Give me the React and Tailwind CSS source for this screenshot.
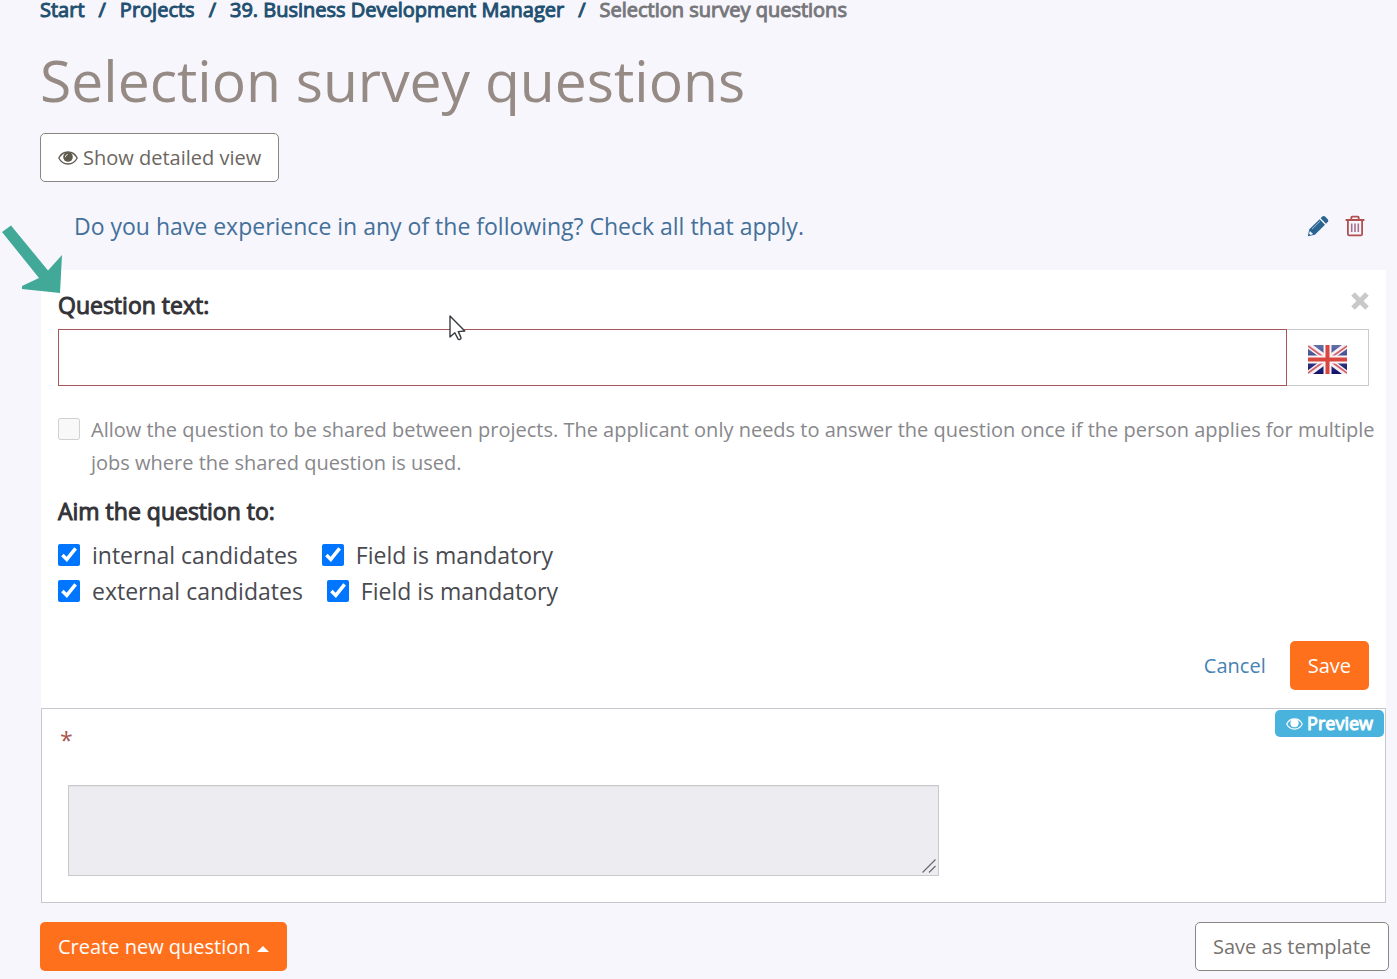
import { useState } from "react";

const crumbs = ["Start", "Projects", "39. Business Development Manager"];

function EyeIcon({ className }) {
    return (
        <svg viewBox="0 0 20 14" className={className} aria-hidden="true">
            <path fill="none" stroke="currentColor" strokeWidth="1.300" d="M.8 7C2.700 3.300 6 1 10 1s7.300 2.300 9.200 6c-1.900 3.700-5.200 6-9.200 6S2.700 10.700.8 7Z" />
            <circle cx="10" cy="6" r="4.800" fill="currentColor" />
            <path fill="none" stroke="#fff" strokeOpacity=".8" strokeWidth="1" d="M7.300 6.200Q7.400 3.700 9.800 3.400" />
        </svg>
    );
}

function PencilIcon() {
    return (
        <svg viewBox="0 0 22 22" className="h-[22px] w-[22px]" aria-hidden="true">
            <path fill="#2a6592" d="M15.300 1.600c.8-.8 2-.8 2.800 0l2.600 2.600c.8.8.8 2 0 2.800l-1.700 1.700-5.400-5.400ZM12.600 4.300l5.400 5.400L7.900 19.700 0.800 21.200l1.500-7Z" />
            <path fill="#f5f6fc" d="M2.900 16.100l3.200 3-2.600.9-1.400-1.400Z" />
            <path stroke="#9fbcd2" strokeWidth="1" d="M5 14 13 6.200" />
        </svg>
    );
}

function TrashIcon() {
    return (
        <svg viewBox="0 0 20 22" className="h-[22px] w-5" fill="none" stroke="#b0514f" aria-hidden="true">
            <path strokeWidth="1.800" d="M.6 5h18.800M6.300 5V2.600q0-1 1-1h5.400q1 0 1 1V5M2.900 5.500v13.500q0 1.400 1.400 1.400h11.400q1.400 0 1.400-1.400v-13.500" />
            <path strokeWidth="1.600" stroke="#a8708a" d="M6.700 8.500v8.500M10 8.500v8.500M13.300 8.500v8.500" />
        </svg>
    );
}

function FlagIcon() {
    return (
        <svg viewBox="0 0 39 29" className="h-[29px] w-[39px]" aria-hidden="true">
            <defs>
                <linearGradient id="flagBlue" x1="0" y1="0" x2="0" y2="1">
                    <stop offset="0" stopColor="#6272a8" />
                    <stop offset="1" stopColor="#11116b" />
                </linearGradient>
                <clipPath id="flagClip">
                    <rect width="39" height="29" rx="1" />
                </clipPath>
            </defs>
            <g clipPath="url(#flagClip)">
                <rect width="39" height="29" fill="url(#flagBlue)" />
                <path stroke="#f6eef2" strokeWidth="6" d="M0 0 39 29M39 0 0 29" />
                <path stroke="#d4606a" strokeWidth="1.800" d="M0 1 18 14M39 1 21 14M0 28 18 15M39 28 21 15" />
                <path stroke="#fbf4f5" strokeWidth="8" d="M19.500 0v29M0 14.500h39" />
                <path stroke="#d9453f" strokeWidth="4" d="M19.500 0v29M0 14.500h39" />
            </g>
        </svg>
    );
}

function CandidateRow({ name }) {
    const [active, setActive] = useState(true);
    const [mandatory, setMandatory] = useState(true);

    return (
        <div className="flex h-9 items-center text-[23px] text-[#494a50]">
            <label className="flex items-center gap-3">
                <input
                    type="checkbox"
                    checked={active}
                    onChange={(e) => setActive(e.target.checked)}
                    className="h-[22px] w-[22px] accent-[#0075ff]"
                />
                {name} candidates
            </label>
            <label className="ml-6 flex items-center gap-3">
                <input
                    type="checkbox"
                    checked={mandatory}
                    onChange={(e) => setMandatory(e.target.checked)}
                    className="h-[22px] w-[22px] accent-[#0075ff]"
                />
                Field is mandatory
            </label>
        </div>
    );
}

export default function App() {
    const [question, setQuestion] = useState("");

    return (
        <div className="min-h-screen bg-[#f6f6fc] pr-2 pb-2 pl-10 font-['Open_Sans',sans-serif]">
            <nav className="flex h-5 items-center text-[20px] leading-5 text-[#1f5070] [-webkit-text-stroke:1px]">
                {crumbs.map((crumb) => (
                    <span key={crumb} className="flex">
                        <a href="#">{crumb}</a>
                        <span className="mx-[14px]">/</span>
                    </span>
                ))}
                <span className="text-[#77777b]">Selection survey questions</span>
            </nav>

            <h1 className="mt-6 text-[57px] leading-[72px] text-[#968a84]">Selection survey questions</h1>

            <button className="mt-[17px] flex h-[49px] items-center gap-[5px] rounded-[5px] border border-[#8c8683] bg-white px-[17px] text-[20px] text-[#6b6661]">
                <EyeIcon className="h-[14px] w-5 text-[#5f584c]" />
                Show detailed view
            </button>

            <div className="flex h-[88px] items-center justify-between pr-6 pl-[34px]">
                <a href="#" className="text-[23px] text-[#44709a]">
                    Do you have experience in any of the following? Check all that apply.
                </a>
                <div className="flex gap-4">
                    <button aria-label="Edit"><PencilIcon /></button>
                    <button aria-label="Delete"><TrashIcon /></button>
                </div>
            </div>

            <form className="relative mr-[3px] ml-px bg-white px-[17px] pt-[18px] pb-[18px]" onSubmit={(e) => e.preventDefault()}>
                {/* pointer to the new question */}
                <svg viewBox="0 0 62 70" className="absolute -top-[46px] -left-[41px] h-[70px] w-[62px]" aria-hidden="true">
                    <path fill="#42a998" d="M2 8 11 1.500 48 46.500 62 31 60 69 22 65v-3l17-8Z" />
                </svg>
                <svg viewBox="0 0 18 28" className="absolute top-[45px] left-[408px] h-7 w-[18px]" aria-hidden="true">
                    <path fill="#fff" stroke="#3a3a42" strokeWidth="1.400" strokeLinejoin="round" d="M1 1v21l4.800-4.300 3.200 6.200q.6 1 1.900.5 1.500-.7 1-2L9.300 16.600l6.500-.6Z" />
                </svg>

                <div className="flex h-[34px] items-start justify-between">
                    <label htmlFor="question" className="text-[23px] leading-[34px] text-[#333338] [-webkit-text-stroke:1px]">Question text:</label>
                    <button type="button" aria-label="Close" className="mt-1">
                        <svg viewBox="0 0 18 18" className="h-[18px] w-[18px]" aria-hidden="true">
                            <path stroke="#c9c9cb" strokeWidth="5" d="M2 2l14 14M16 2 2 16" />
                        </svg>
                    </button>
                </div>
                <div className="mt-[7px] flex h-[57px]">
                    <input
                        id="question"
                        type="text"
                        value={question}
                        onChange={(e) => setQuestion(e.target.value)}
                        className="min-w-0 grow border border-[#a5575a] px-4 text-[23px] outline-none"
                    />
                    <button type="button" aria-label="English" className="flex w-[82px] items-center justify-center border border-l-0 border-[#cacace] pt-[3px]">
                        <FlagIcon />
                    </button>
                </div>

                <label className="mt-[27px] -mr-2 flex items-start gap-[11px] text-[20px] leading-[33px] text-[#88888c]">
                    <input type="checkbox" disabled className="mt-[5px] h-[22px] w-[22px] shrink-0" />
                    <span>
                        Allow the question to be shared between projects. The applicant only needs to answer the question once if the person applies for multiple jobs where the shared question is used.
                    </span>
                </label>

                <h2 className="mt-4 text-[23px] leading-8 text-[#333338] [-webkit-text-stroke:1px]">Aim the question to:</h2>
                <div className="mt-[10px]">
                    <CandidateRow name="internal" />
                    <CandidateRow name="external" />
                </div>

                <div className="mt-8 flex items-center justify-end gap-6 text-[20px]">
                    <a href="#" className="text-[#4682b4]">Cancel</a>
                    <button className="h-[49px] rounded-[5px] bg-[#ff701c] px-[18px] text-white">Save</button>
                </div>
            </form>

            <section className="relative mr-[3px] ml-px border border-[#c6c8ce] bg-white px-[18px] pt-[15px] pb-[26px]">
                <span className="absolute top-px right-px flex h-[27px] items-center gap-1 rounded-[5px] bg-[#4ab3dd] px-[11px] text-[18px] text-white [-webkit-text-stroke:1px]">
                    <EyeIcon className="h-[12px] w-[17px]" />
                    Preview
                </span>
                <label htmlFor="preview" className="block h-[61px] text-[23px] leading-8 text-[#a9524e]">*</label>
                <div className="relative ml-2 w-2/3">
                    <textarea
                        id="preview"
                        disabled
                        className="block h-[91px] w-full resize-none border border-[#c8c9cb] bg-[#ededf1] p-3 inset-shadow-xs"
                    />
                    <svg viewBox="0 0 14 14" className="absolute right-[3px] bottom-[3px] h-[14px] w-[14px]" aria-hidden="true">
                        <path stroke="#6a6a6e" strokeWidth="1.200" d="M.5 13.500l13-13M7 13.500l6.500-6.500" />
                    </svg>
                </div>
            </section>

            <footer className="mt-[19px] flex items-center justify-between text-[20px]">
                <button className="flex h-[49px] items-center gap-[6px] rounded-[5px] bg-[#ff701c] px-[18px] text-white">
                    Create new question
                    <svg viewBox="0 0 12 6" className="mt-1 h-[6px] w-3" fill="currentColor" aria-hidden="true">
                        <path d="M6 0l6 6H0Z" />
                    </svg>
                </button>
                <button className="h-[49px] rounded-[5px] border border-[#8c8683] bg-white px-[17px] text-[#77736f]">Save as template</button>
            </footer>
        </div>
    );
}
